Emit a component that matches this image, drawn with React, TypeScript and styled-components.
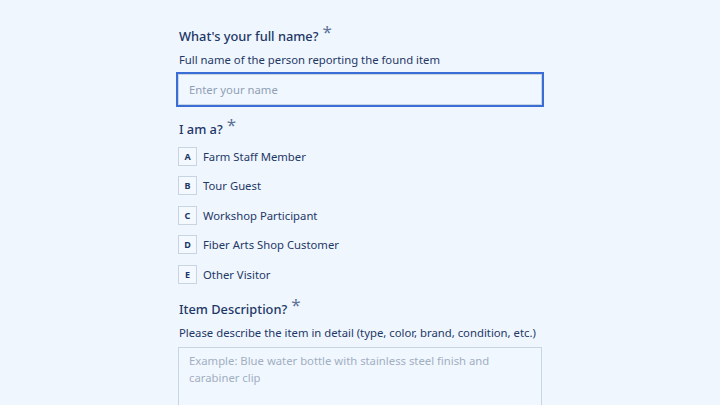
import React from 'react';
import styled, { createGlobalStyle } from 'styled-components';

const GlobalStyle = createGlobalStyle`
  html, body {
    margin: 0;
    padding: 0;
    background: #eff6fe;
  }
  body {
    font-family: 'Noto Sans', 'Open Sans', sans-serif;
    overflow: hidden;
  }
`;

const Page = styled.div`
  width: 720px;
  height: 405px;
  overflow: hidden;
  background: #eff6fe;
  display: flex;
  justify-content: center;
`;

const Column = styled.form`
  width: 364px;
  padding-top: 25px;
  display: flex;
  flex-direction: column;
`;

const Question = styled.div<{ $gap?: number }>`
  display: flex;
  flex-direction: column;
  margin-bottom: ${(p) => p.$gap ?? 13}px;
`;

const Title = styled.h2`
  margin: 0;
  font-size: 12.8px;
  font-weight: 500;
  color: #1d3767;
  line-height: 22px;
  height: 22px;
  padding-left: 1px;
`;

const Star = styled.span`
  color: #5d7397;
  font-size: 17px;
  font-weight: 400;
  line-height: 0;
  position: relative;
  top: -3px;
  margin-left: 4px;
`;

const Hint = styled.p`
  margin: 3.5px 0 5px;
  font-size: 11.3px;
  color: #1f3866;
  line-height: 18px;
  padding-left: 1px;
  white-space: nowrap;
`;

const TextInput = styled.input`
  box-sizing: border-box;
  width: 100%;
  height: 31px;
  margin: 0;
  padding: 0 10px;
  border: 1px solid #c7d4e2;
  outline: 2px solid #3a6ed6;
  outline-offset: 0;
  background: #f1f7fe;
  font: inherit;
  font-size: 11.3px;
  color: #1d3767;

  &::placeholder {
    color: #8f9fb6;
  }
`;

const TextArea = styled.textarea`
  box-sizing: border-box;
  width: 100%;
  height: 80px;
  margin: 0;
  padding: 4px 10px;
  border: 1px solid #c7d4e2;
  outline: none;
  resize: none;
  background: #f1f7fe;
  font: inherit;
  font-size: 11.3px;
  line-height: 17px;
  color: #1d3767;

  &::placeholder {
    color: #a1afc2;
  }
`;

const Options = styled.div`
  display: flex;
  flex-direction: column;
  gap: 10.6px;
  margin-top: 7px;
`;

const Option = styled.label`
  display: flex;
  align-items: center;
  gap: 6px;
  height: 19px;
  font-size: 11.3px;
  color: #1f3866;
  cursor: pointer;
`;

const Key = styled.span`
  box-sizing: border-box;
  width: 19px;
  height: 19px;
  border: 1px solid #c7d4e2;
  background: #f4f9ff;
  display: flex;
  align-items: center;
  justify-content: center;
  font-size: 9px;
  font-weight: 700;
  color: #1d3767;
`;

const choices = [
  'Farm Staff Member',
  'Tour Guest',
  'Workshop Participant',
  'Fiber Arts Shop Customer',
  'Other Visitor',
];

export default function App() {
  return (
    <>
      <GlobalStyle />
      <Page>
        <Column>
          <Question>
            <Title>
              What's your full name?<Star>*</Star>
            </Title>
            <Hint>Full name of the person reporting the found item</Hint>
            <TextInput placeholder="Enter your name" />
          </Question>
          <Question $gap={14.6}>
            <Title>
              I am a?<Star>*</Star>
            </Title>
            <Options>
              {choices.map((c, i) => (
                <Option key={c}>
                  <Key>{String.fromCharCode(65 + i)}</Key>
                  {c}
                </Option>
              ))}
            </Options>
          </Question>
          <Question>
            <Title>
              Item Description?<Star>*</Star>
            </Title>
            <Hint>Please describe the item in detail (type, color, brand, condition, etc.)</Hint>
            <TextArea placeholder="Example: Blue water bottle with stainless steel finish and carabiner clip" />
          </Question>
        </Column>
      </Page>
    </>
  );
}
